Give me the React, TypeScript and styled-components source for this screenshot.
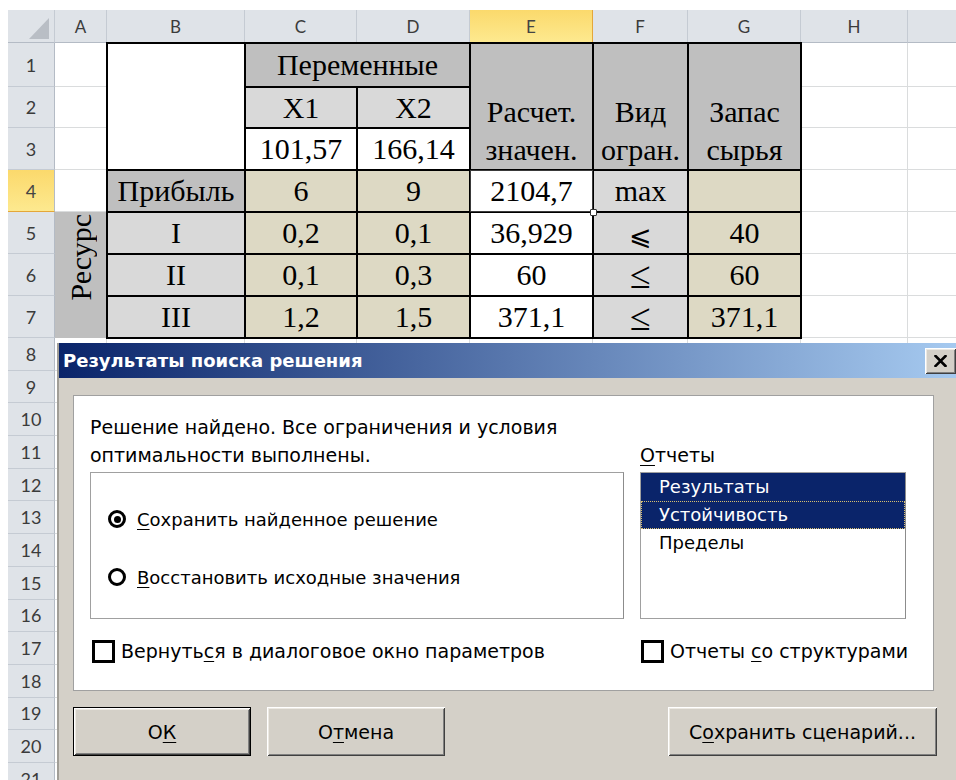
import React from 'react';
import styled, { createGlobalStyle, css } from 'styled-components';

const GlobalStyle = createGlobalStyle`
  html, body {
    margin: 0;
    padding: 0;
    background: #fff;
  }
`;

const SERIF = `"Liberation Serif", "Times New Roman", serif`;
const HEAD_FONT = `Lato, "Noto Sans", sans-serif`;
const UI_FONT = `"DejaVu Sans", Tahoma, sans-serif`;

// column widths: row numbers, A..H, and a sliver of I
const COLS = [47, 52, 138, 112, 113, 123, 95, 113, 107, 60];
// header, rows 1-7 (tall), rows 8-21
const ROWS = [33, 44, 41, 42, 42, 42, 42, 42, ...Array(14).fill(32.7)];
const LETTERS = ['A', 'B', 'C', 'D', 'E', 'F', 'G', 'H', ''];

type Fill = 'dark' | 'light' | 'tan' | 'white';

const FILLS: Record<Fill, string> = {
  dark: '#bfbfbf',
  light: '#d9d9d9',
  tan: '#ddd9c4',
  white: '#ffffff',
};

type TableCell = {
  r: number;
  c: number;
  rs?: number;
  cs?: number;
  t?: string;
  fill: Fill;
  box?: boolean;
  bottom?: boolean;
  rotate?: boolean;
  selected?: boolean;
  sign?: 'slant' | 'flat';
};

const TABLE: TableCell[] = [
  { r: 2, c: 3, rs: 3, fill: 'white', box: true },
  { r: 2, c: 4, cs: 2, t: 'Переменные', fill: 'dark', box: true },
  { r: 2, c: 6, rs: 3, t: 'Расчет.\nзначен.', fill: 'dark', box: true, bottom: true },
  { r: 2, c: 7, rs: 3, t: 'Вид\nогран.', fill: 'dark', box: true, bottom: true },
  { r: 2, c: 8, rs: 3, t: 'Запас\nсырья', fill: 'dark', box: true, bottom: true },
  { r: 3, c: 4, t: 'X1', fill: 'light', box: true },
  { r: 3, c: 5, t: 'X2', fill: 'light', box: true },
  { r: 4, c: 4, t: '101,57', fill: 'white', box: true },
  { r: 4, c: 5, t: '166,14', fill: 'white', box: true },
  { r: 5, c: 3, t: 'Прибыль', fill: 'dark', box: true },
  { r: 5, c: 4, t: '6', fill: 'tan', box: true },
  { r: 5, c: 5, t: '9', fill: 'tan', box: true },
  { r: 5, c: 6, t: '2104,7', fill: 'white', selected: true },
  { r: 5, c: 7, t: 'max', fill: 'light', box: true },
  { r: 5, c: 8, fill: 'tan', box: true },
  { r: 6, c: 2, rs: 3, t: 'Ресурс', fill: 'dark', rotate: true },
  { r: 6, c: 3, t: 'I', fill: 'light', box: true },
  { r: 6, c: 4, t: '0,2', fill: 'tan', box: true },
  { r: 6, c: 5, t: '0,1', fill: 'tan', box: true },
  { r: 6, c: 6, t: '36,929', fill: 'white', box: true },
  { r: 6, c: 7, t: '⩽', fill: 'light', box: true, sign: 'slant' },
  { r: 6, c: 8, t: '40', fill: 'tan', box: true },
  { r: 7, c: 3, t: 'II', fill: 'light', box: true },
  { r: 7, c: 4, t: '0,1', fill: 'tan', box: true },
  { r: 7, c: 5, t: '0,3', fill: 'tan', box: true },
  { r: 7, c: 6, t: '60', fill: 'white', box: true },
  { r: 7, c: 7, t: '≤', fill: 'light', box: true, sign: 'flat' },
  { r: 7, c: 8, t: '60', fill: 'tan', box: true },
  { r: 8, c: 3, t: 'III', fill: 'light', box: true },
  { r: 8, c: 4, t: '1,2', fill: 'tan', box: true },
  { r: 8, c: 5, t: '1,5', fill: 'tan', box: true },
  { r: 8, c: 6, t: '371,1', fill: 'white', box: true },
  { r: 8, c: 7, t: '≤', fill: 'light', box: true, sign: 'flat' },
  { r: 8, c: 8, t: '371,1', fill: 'tan', box: true },
];

const taken = new Set<string>();
TABLE.forEach((t) => {
  for (let i = 0; i < (t.rs ?? 1); i++)
    for (let j = 0; j < (t.cs ?? 1); j++) taken.add(`${t.r + i}:${t.c + j}`);
});

type Place = { $r: number; $c: number; $rs?: number; $cs?: number };

const place = css<Place>`
  grid-row: ${(p) => p.$r} / span ${(p) => p.$rs ?? 1};
  grid-column: ${(p) => p.$c} / span ${(p) => p.$cs ?? 1};
`;

const Page = styled.div`
  position: relative;
  width: 956px;
  height: 780px;
  overflow: hidden;
  padding: 10px 0 0 8px;
  box-sizing: border-box;
`;

const Sheet = styled.div`
  display: grid;
  grid-template-columns: ${COLS.map((w) => `${w}px`).join(' ')};
  grid-template-rows: ${ROWS.map((h) => `${h}px`).join(' ')};
`;

const Corner = styled.div`
  grid-row: 1;
  grid-column: 1;
  background: #dfe3e8;
  border-right: 1px solid #c5cbd3;
  border-bottom: 1px solid #b4bbc5;
  display: flex;
  align-items: flex-end;
  justify-content: flex-end;
  padding: 0 5px 3px 0;
`;

const headBase = css`
  display: flex;
  align-items: center;
  justify-content: center;
  font-family: ${HEAD_FONT};
  font-size: 17px;
  color: #3b3b3b;
  background: #dfe3e8;
  box-sizing: border-box;
`;

const activeHead = css`
  background: linear-gradient(#fbd96c, #fde98f);
  color: #444;
`;

const ColHead = styled.div<Place & { $active?: boolean }>`
  ${place};
  ${headBase};
  border-right: 1px solid #c5cbd3;
  border-bottom: 1px solid #b4bbc5;
  ${(p) =>
    p.$active &&
    css`
      ${activeHead};
      border-right-color: #e4a73a;
      border-bottom-color: #e4a73a;
    `}
`;

const RowHead = styled.div<Place & { $active?: boolean }>`
  ${place};
  ${headBase};
  font-size: 18px;
  border-bottom: 1px solid #c5cbd3;
  border-right: 1px solid #b4bbc5;
  ${(p) =>
    p.$active &&
    css`
      ${activeHead};
      border-bottom-color: #e4a73a;
    `}
`;

const Blank = styled.div<Place>`
  ${place};
  border-right: 1px solid #dadcdd;
  border-bottom: 1px solid #dadcdd;
`;

const Cell = styled.div<Place & { $fill: Fill; $box?: boolean; $bottom?: boolean; $selected?: boolean }>`
  ${place};
  display: flex;
  justify-content: center;
  align-items: ${(p) => (p.$bottom ? 'flex-end' : 'center')};
  padding-bottom: ${(p) => (p.$bottom ? '1px' : '0')};
  box-sizing: border-box;
  background: ${(p) => FILLS[p.$fill]};
  font-family: ${SERIF};
  font-size: 30px;
  line-height: 38px;
  color: #000;
  text-align: center;
  white-space: pre-line;
  ${(p) =>
    p.$box &&
    css`
      position: relative;
      z-index: 1;
      box-shadow: 0 0 0 1px #000, inset 0 0 0 1px #000;
    `}
  ${(p) =>
    p.$selected &&
    css`
      position: relative;
      z-index: 2;
      box-shadow: inset 0 0 0 1px #3a3a3a;
    `}
`;

const Sign = styled.span<{ $kind: 'slant' | 'flat' }>`
  line-height: 1;
  ${(p) =>
    p.$kind === 'slant'
      ? css`
          font-family: "DejaVu Serif", serif;
          font-size: 27px;
          padding-top: 4px;
        `
      : css`
          font-size: 38px;
        `}
`;

const SideLabel = styled(Cell)`
  justify-content: center;
  align-items: flex-start;
  padding-top: 2px;
`;

const Vertical = styled.span`
  writing-mode: vertical-rl;
  transform: rotate(180deg);
  line-height: 30px;
`;

const FillHandle = styled.span`
  position: absolute;
  right: -4px;
  bottom: -4px;
  width: 5px;
  height: 5px;
  background: #fff;
  border: 1px solid #333;
  border-radius: 1px;
`;

/* ---------- solver results dialog ---------- */

const Dialog = styled.div`
  position: absolute;
  left: 57px;
  top: 343px;
  width: 901px;
  height: 450px;
  background: #d4d0c8;
  border-left: 2px solid #a19e97;
  box-sizing: border-box;
  z-index: 10;
  font-family: ${UI_FONT};
  font-size: 19px;
  color: #000;
`;

const TitleBar = styled.div`
  height: 35px;
  display: flex;
  align-items: center;
  padding: 0 2px 0 4px;
  background: linear-gradient(to right, #0a246a, #a6caf0);
  color: #fff;
  font-weight: bold;
  font-size: 18px;
`;

const bevel = css`
  background: #d4d0c8;
  box-shadow: inset 1px 1px #fff, inset -1px -1px #404040, inset 2px 2px #ece9e2, inset -2px -2px #808080;
`;

const CloseBtn = styled.div`
  ${bevel};
  margin-left: auto;
  width: 31px;
  height: 26px;
  display: flex;
  align-items: center;
  justify-content: center;
`;

const Body = styled.div`
  padding: 17px 0 0 14px;
`;

const Panel = styled.div`
  width: 861px;
  height: 296px;
  box-sizing: border-box;
  background: #fff;
  border: 1px solid #a0a0a0;
  padding: 17px 16px 0 16px;
  display: grid;
  grid-template-columns: 534px 266px;
  grid-template-rows: 56px 147px 28px;
  column-gap: 16px;
  row-gap: 0;
`;

const Message = styled.div`
  line-height: 28px;
  white-space: nowrap;
`;

const ReportsLabel = styled.div`
  align-self: end;
  line-height: 28px;
`;

const Acc = styled.span`
  text-decoration: underline;
  text-underline-offset: 3px;
`;

const GroupBox = styled.div`
  margin-top: 3px;
  height: 147px;
  box-sizing: border-box;
  border: 1px solid #a0a0a0;
  border-right-color: #8c8c8c;
  padding: 32px 0 0 17px;
  display: flex;
  flex-direction: column;
  gap: 30px;
`;

const Option = styled.label`
  display: flex;
  align-items: center;
  gap: 11px;
  height: 28px;
  font-size: 18px;
`;

const RadioDot = styled.span<{ $on?: boolean }>`
  width: 18px;
  height: 18px;
  box-sizing: border-box;
  border: 3px solid #000;
  border-radius: 50%;
  display: inline-flex;
  align-items: center;
  justify-content: center;
  &::after {
    content: '';
    width: 7px;
    height: 7px;
    border-radius: 50%;
    background: ${(p) => (p.$on ? '#000' : 'transparent')};
  }
`;

const ListBox = styled.div`
  margin-top: 3px;
  height: 147px;
  box-sizing: border-box;
  border: 1px solid #a0a0a0;
  border-right-color: #8c8c8c;
`;

const ListItem = styled.div<{ $selected?: boolean; $focus?: boolean }>`
  height: 28px;
  line-height: 28px;
  padding-left: 18px;
  font-size: 18px;
  background: ${(p) => (p.$selected ? '#0a246a' : 'transparent')};
  color: ${(p) => (p.$selected ? '#fff' : '#000')};
  ${(p) =>
    p.$focus &&
    css`
      outline: 1px dotted #d8c070;
      outline-offset: -1px;
    `}
`;

const CheckRow = styled.label<{ $indent?: number }>`
  margin-top: 21px;
  margin-left: ${(p) => p.$indent ?? 0}px;
  display: flex;
  align-items: center;
  gap: 6px;
  height: 28px;
  white-space: nowrap;
`;

const CheckBox = styled.span`
  width: 23px;
  height: 23px;
  flex: none;
  box-sizing: border-box;
  border: 3px solid #000;
  background: #fff;
`;

const ButtonRow = styled.div`
  width: 864px;
  margin-top: 16px;
  display: flex;
  gap: 16px;
`;

const Button = styled.div<{ $w: number; $default?: boolean }>`
  ${bevel};
  width: ${(p) => p.$w}px;
  height: 49px;
  box-sizing: border-box;
  display: flex;
  align-items: center;
  justify-content: center;
  ${(p) =>
    p.$default &&
    css`
      border: 1px solid #000;
    `}
`;

const Spacer = styled.div`
  flex: 1;
`;

function CornerMark() {
  return (
    <svg width="20" height="21" viewBox="0 0 20 21">
      <polygon points="20,0 20,21 0,21" fill="#b9bec5" />
    </svg>
  );
}

function CloseGlyph() {
  return (
    <svg width="13" height="12" viewBox="0 0 13 12">
      <path d="M1.5 1 L11.5 11 M11.5 1 L1.5 11" stroke="#000" strokeWidth="2.6" strokeLinecap="square" />
    </svg>
  );
}

function SolverDialog() {
  return (
    <Dialog>
      <TitleBar>
        Результаты поиска решения
        <CloseBtn>
          <CloseGlyph />
        </CloseBtn>
      </TitleBar>
      <Body>
        <Panel>
          <Message>
            Решение найдено. Все ограничения и условия
            <br />
            оптимальности выполнены.
          </Message>
          <ReportsLabel>
            <Acc>О</Acc>тчеты
          </ReportsLabel>
          <GroupBox>
            <Option>
              <RadioDot $on />
              <span>
                <Acc>С</Acc>охранить найденное решение
              </span>
            </Option>
            <Option>
              <RadioDot />
              <span>
                <Acc>В</Acc>осстановить исходные значения
              </span>
            </Option>
          </GroupBox>
          <ListBox>
            <ListItem $selected>Результаты</ListItem>
            <ListItem $selected $focus>
              Устойчивость
            </ListItem>
            <ListItem>Пределы</ListItem>
          </ListBox>
          <CheckRow $indent={2}>
            <CheckBox />
            <span>
              Вернуть<Acc>с</Acc>я в диалоговое окно параметров
            </span>
          </CheckRow>
          <CheckRow $indent={1}>
            <CheckBox />
            <span>
              Отчеты <Acc>с</Acc>о структурами
            </span>
          </CheckRow>
        </Panel>
        <ButtonRow>
          <Button $w={178} $default>
            О<Acc>К</Acc>
          </Button>
          <Button $w={178}>
            О<Acc>т</Acc>мена
          </Button>
          <Spacer />
          <Button $w={269}>
            С<Acc>о</Acc>хранить сценарий...
          </Button>
        </ButtonRow>
      </Body>
    </Dialog>
  );
}

function App() {
  const blanks: React.ReactNode[] = [];
  for (let r = 2; r <= ROWS.length; r++) {
    for (let c = 2; c <= COLS.length; c++) {
      if (!taken.has(`${r}:${c}`)) blanks.push(<Blank key={`b${r}-${c}`} $r={r} $c={c} />);
    }
  }

  return (
    <Page>
      <GlobalStyle />
      <Sheet>
        <Corner>
          <CornerMark />
        </Corner>
        {LETTERS.map((l, i) => (
          <ColHead key={`h${i}`} $r={1} $c={i + 2} $active={l === 'E'}>
            {l}
          </ColHead>
        ))}
        {ROWS.slice(1).map((_, i) => (
          <RowHead key={`r${i}`} $r={i + 2} $c={1} $active={i + 1 === 4}>
            {i + 1}
          </RowHead>
        ))}
        {blanks}
        {TABLE.map((t, i) =>
          t.rotate ? (
            <SideLabel key={`t${i}`} $r={t.r} $c={t.c} $rs={t.rs} $cs={t.cs} $fill={t.fill}>
              <Vertical>{t.t}</Vertical>
            </SideLabel>
          ) : (
            <Cell
              key={`t${i}`}
              $r={t.r}
              $c={t.c}
              $rs={t.rs}
              $cs={t.cs}
              $fill={t.fill}
              $box={t.box}
              $bottom={t.bottom}
              $selected={t.selected}
            >
              {t.sign ? <Sign $kind={t.sign}>{t.t}</Sign> : t.t}
              {t.selected && <FillHandle />}
            </Cell>
          )
        )}
      </Sheet>
      <SolverDialog />
    </Page>
  );
}

export default App;
